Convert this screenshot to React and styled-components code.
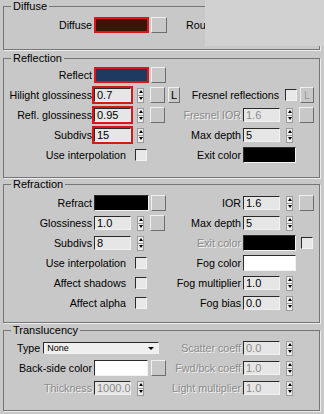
import React from 'react'
import styled, { createGlobalStyle, css } from 'styled-components'

const Global = createGlobalStyle`
  html, body {
    margin: 0;
    background: #c8c8c8;
  }
  body {
    font-family: "Liberation Sans", Arial, sans-serif;
    font-size: 10.7px;
    color: #000;
  }
`

const Panel = styled.div`
  position: relative;
  width: 324px;
  height: 414px;
  overflow: hidden;
  box-sizing: border-box;
  padding: 0 4px 0 3px;
  display: flex;
  flex-direction: column;
`

const Cover = styled.div`
  position: absolute;
  top: 0;
  left: 205px;
  width: 119px;
  height: 46px;
  background: #d1d1d1;
`

const Group = styled.fieldset`
  margin: ${p => p.$mt || 0}px 0 0;
  min-width: 0;
  padding: ${p => p.$pt}px 0 ${p => p.$pb}px;
  border: 1px solid #767676;
  box-shadow: 1px 1px 0 #ececec;
`

const Legend = styled.legend`
  margin-left: 7px;
  padding: 0 2px;
  font-size: 11px;
  line-height: 12px;
`

const Grid = styled.div`
  display: grid;
  grid-template-columns: 88px 86px 59px 76px;
  grid-auto-rows: 20px;
  column-gap: 2px;
  align-items: center;
`

const Label = styled.div`
  grid-column: ${p => p.$col};
  display: flex;
  justify-content: ${p => (p.$start ? 'flex-start' : 'flex-end')};
  align-items: center;
  white-space: nowrap;
  gap: ${p => p.$gap || 0}px;
  padding-right: ${p => p.$pr || 0}px;
  padding-left: ${p => p.$pl || 0}px;
`

const Text = styled.span`
  ${p =>
    p.$dim &&
    css`
      color: #8a8a8a;
      text-shadow: 1px 1px 0 #f4f4f4;
    `}
`

const Controls = styled.div`
  grid-column: ${p => p.$col};
  display: flex;
  align-items: center;
`

const sunken = css`
  box-sizing: border-box;
  border-top: 1px solid #2a2a2a;
  border-left: 1px solid #2a2a2a;
  border-right: 1px solid #f2f2f2;
  border-bottom: 1px solid #f2f2f2;
`

const Field = styled.div`
  ${sunken};
  width: 37px;
  height: 14px;
  margin-left: ${p => p.$ml || 0}px;
  background: #e6e6e6;
  font-size: 11px;
  line-height: 12px;
  padding-left: 2px;
  color: ${p => (p.$dim ? '#8a8a8a' : '#000')};
  ${p => p.$mark && css`outline: 2px solid #dd1518;`}
`

const Swatch = styled.div`
  box-sizing: border-box;
  width: ${p => p.$w}px;
  height: 16px;
  background: ${p => p.$color};
  ${p => (p.$mark ? css`border: 2px solid #dd1518;` : sunken)};
`

const SpinBox = styled.div`
  box-sizing: border-box;
  width: 7px;
  height: 15px;
  margin-left: 6px;
  display: flex;
  flex-direction: column;
  background: #ececec;
  border: 1px solid #9a9a9a;
`

const SpinHalf = styled.div`
  flex: 1;
  display: flex;
  align-items: center;
  justify-content: center;
  & + & {
    border-top: 1px solid #9a9a9a;
  }
  &::after {
    content: '';
    border-left: 2px solid transparent;
    border-right: 2px solid transparent;
    ${p =>
      p.$down
        ? css`border-top: 3px solid #000;`
        : css`border-bottom: 3px solid #000;`}
  }
`

const Spinner = () => (
  <SpinBox>
    <SpinHalf />
    <SpinHalf $down />
  </SpinBox>
)

const MapButton = styled.div`
  box-sizing: border-box;
  width: ${p => p.$w || 15}px;
  height: 16px;
  margin-left: ${p => p.$ml ?? 6}px;
  background: #c8c8c8;
  border-top: 1px solid #f0f0f0;
  border-left: 1px solid #f0f0f0;
  border-right: 1px solid #6e6e6e;
  border-bottom: 1px solid #6e6e6e;
  display: flex;
  align-items: center;
  justify-content: center;
  font-size: 11px;
  color: ${p => (p.$dim ? '#9a9a9a' : '#000')};
`

const Check = styled.div`
  ${sunken};
  width: 12px;
  height: 12px;
  margin-left: ${p => p.$ml || 0}px;
  background: #e8e8e8;
`

const Select = styled.div`
  ${sunken};
  width: 116px;
  height: 12px;
  background: #efefef;
  display: flex;
  align-items: center;
  justify-content: space-between;
  padding: 0 4px 0 3px;
  font-size: 9px;
  &::after {
    content: '';
    border-left: 3px solid transparent;
    border-right: 3px solid transparent;
    border-top: 3px solid #000;
  }
`

const Rou = styled.span`
  padding-left: 4px;
`

const NumRow = ({ col, value, dim, mark, button = true }) => (
  <Controls $col={col}>
    <Field $dim={dim} $mark={mark}>{value}</Field>
    <Spinner />
    {button && <MapButton />}
  </Controls>
)

const App = () => (
  <Panel>
    <Global />
    <Group $pt={3} $pb={14}>
      <Legend>Diffuse</Legend>
      <Grid>
        <Label $col="1">Diffuse</Label>
        <Controls $col="2">
          <Swatch $w={55} $color="#3b1407" $mark />
          <MapButton $ml={2} $w={16} />
        </Controls>
        <Label $col="3" $start>
          <Rou>Rou</Rou>
        </Label>
      </Grid>
    </Group>

    <Group $mt={2} $pt={1} $pb={12}>
      <Legend>Reflection</Legend>
      <Grid>
        <Label $col="1">Reflect</Label>
        <Controls $col="2">
          <Swatch $w={55} $color="#1f3a60" $mark />
          <MapButton $ml={2} />
        </Controls>

        <Label $col="1">Hilight glossiness</Label>
        <Controls $col="2">
          <Field $mark>0.7</Field>
          <Spinner />
          <MapButton />
          <MapButton $ml={3} $w={12}>L</MapButton>
        </Controls>
        <Label $col="3 / 5" $pr={5}>
          Fresnel reflections
          <Check $ml={6} />
          <MapButton $ml={3} $w={14} $dim>L</MapButton>
        </Label>

        <Label $col="1">Refl. glossiness</Label>
        <NumRow col="2" value="0.95" mark />
        <Label $col="3"><Text $dim>Fresnel IOR</Text></Label>
        <NumRow col="4" value="1.6" dim />

        <Label $col="1">Subdivs</Label>
        <NumRow col="2" value="15" mark button={false} />
        <Label $col="3">Max depth</Label>
        <NumRow col="4" value="5" button={false} />

        <Label $col="1 / 3" $pr={33} $gap={9}>
          Use interpolation
          <Check />
        </Label>
        <Label $col="3">Exit color</Label>
        <Controls $col="4">
          <Swatch $w={53} $color="#000" />
        </Controls>
      </Grid>
    </Group>

    <Group $pt={3} $pb={9}>
      <Legend>Refraction</Legend>
      <Grid>
        <Label $col="1">Refract</Label>
        <Controls $col="2">
          <Swatch $w={55} $color="#000" />
          <MapButton $ml={2} />
        </Controls>
        <Label $col="3">IOR</Label>
        <NumRow col="4" value="1.6" />

        <Label $col="1">Glossiness</Label>
        <NumRow col="2" value="1.0" />
        <Label $col="3">Max depth</Label>
        <NumRow col="4" value="5" button={false} />

        <Label $col="1">Subdivs</Label>
        <NumRow col="2" value="8" button={false} />
        <Label $col="3"><Text $dim>Exit color</Text></Label>
        <Controls $col="4">
          <Swatch $w={53} $color="#000" />
          <Check $ml={5} />
        </Controls>

        <Label $col="1 / 3" $pr={33} $gap={9}>
          Use interpolation
          <Check />
        </Label>
        <Label $col="3">Fog color</Label>
        <Controls $col="4">
          <Swatch $w={53} $color="#fff" />
        </Controls>

        <Label $col="1 / 3" $pr={33} $gap={9}>
          Affect shadows
          <Check />
        </Label>
        <Label $col="3">Fog multiplier</Label>
        <NumRow col="4" value="1.0" button={false} />

        <Label $col="1 / 3" $pr={33} $gap={9}>
          Affect alpha
          <Check />
        </Label>
        <Label $col="3">Fog bias</Label>
        <NumRow col="4" value="0.0" button={false} />
      </Grid>
    </Group>

    <Group $mt={1} $pt={2} $pb={12}>
      <Legend>Translucency</Legend>
      <Grid>
        <Label $col="1 / 3" $start $pl={13} $gap={3}>
          Type
          <Select>None</Select>
        </Label>
        <Label $col="3"><Text $dim>Scatter coeff</Text></Label>
        <NumRow col="4" value="0.0" dim button={false} />

        <Label $col="1">Back-side color</Label>
        <Controls $col="2">
          <Swatch $w={54} $color="#fff" />
          <MapButton $ml={3} />
        </Controls>
        <Label $col="3"><Text $dim>Fwd/bck coeff</Text></Label>
        <NumRow col="4" value="1.0" dim button={false} />

        <Label $col="1"><Text $dim>Thickness</Text></Label>
        <Controls $col="2">
          <Field $dim>1000.0</Field>
          <Spinner />
        </Controls>
        <Label $col="3"><Text $dim>Light multiplier</Text></Label>
        <NumRow col="4" value="1.0" dim button={false} />
      </Grid>
    </Group>
    <Cover />
  </Panel>
)

export default App
